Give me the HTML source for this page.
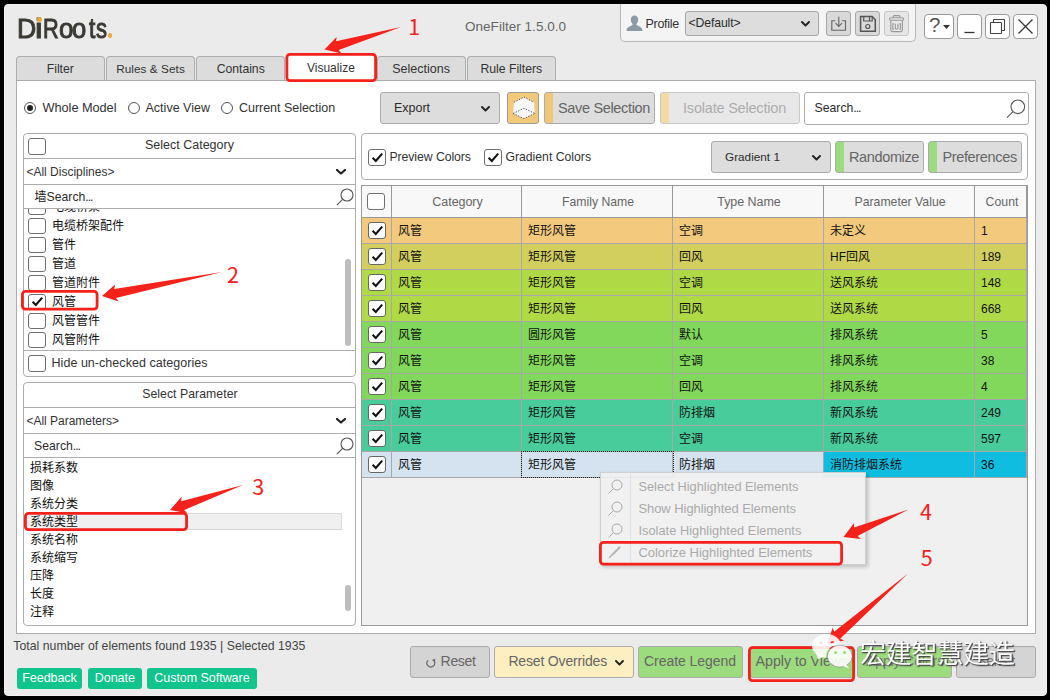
<!DOCTYPE html><html lang="zh"><head><meta charset="utf-8"><title>OneFilter 1.5.0.0</title><style>
*{box-sizing:border-box;margin:0;padding:0}
html,body{width:1050px;height:700px;overflow:hidden;background:#000}
body{font-family:"Liberation Sans", "Noto Sans CJK SC", sans-serif;font-size:13px;color:#333;position:relative}
.a{position:absolute}
.win{left:4px;top:4px;width:1043px;height:692px;background:#ebebeb;border:1px solid #f1f1f1;border-radius:4px}
.tab{top:56px;height:25px;width:89px;background:#dcdcdc;border:1px solid #adadad;border-bottom:none;border-radius:4px 4px 0 0}
.panel{background:#fff;border:1px solid #adadad}
.btn{background:#dddddd;border:1px solid #ababab;border-radius:3px}
.t{white-space:nowrap;line-height:20px}
.cb{background:#fff;border:1px solid #707070;border-radius:3px}
.cj{font-size:12px;color:#111;letter-spacing:0}
.hl{border-top:1px solid #adadad;height:0}
.row{left:362px;width:665px;height:26px}
.cell{top:0;height:26px;border-right:1px solid #a8a8a8;border-bottom:1px solid #a8a8a8;line-height:27px;font-size:12px;color:#111;padding-left:6px;white-space:nowrap}
.hd{top:0;height:32px;background:#f8f8f8;border-right:1px solid #999;border-bottom:1px solid #999}
.num{color:#f5211b;font-size:21px;line-height:20px;font-family:"Noto Sans CJK SC","Liberation Sans",sans-serif}
</style></head><body>
<div class="a win"></div>
<div class="a" id="logo" style="left:0;top:10.950px;height:36px;width:130px;font-size:28.0px;line-height:36px;color:#3a3933;-webkit-text-stroke:1.0px #3a3933;white-space:nowrap">
<span class="a" style="left:17.21px;top:0;transform-origin:0 0;transform:scaleX(0.953)">D</span><span class="a" style="left:35.07px;top:0;transform-origin:0 0;transform:scaleX(1.219)">i</span><span class="a" style="left:43.02px;top:0;transform-origin:0 0;transform:scaleX(0.776)">R</span><span class="a" style="left:58.81px;top:0;transform-origin:0 0;transform:scaleX(0.930)">o</span><span class="a" style="left:71.82px;top:0;transform-origin:0 0;transform:scaleX(0.915)">o</span><span class="a" style="left:88.96px;top:0;transform-origin:0 0;transform:scaleX(0.811)">t</span><span class="a" style="left:96.39px;top:0;transform-origin:0 0;transform:scaleX(0.786)">s</span><span class="a" style="left:107.500px;top:22.550px;width:4.600px;height:4.600px;border-radius:50%;background:#e9a83a;color:transparent;-webkit-text-stroke:0;overflow:hidden;font-size:4px;line-height:4px">.</span>
</div>
<div class="a" style="left:37.2px;top:16.600px;width:5.200px;height:5.200px;border-radius:50%;background:#e9a83a"></div>
<div class="a t" style="left:465.0px;top:17.0px;font-size:13.50px;letter-spacing:0.03px;color:#666;line-height:20px;">OneFilter 1.5.0.0</div>
<div class="a" style="left:620px;top:4px;width:296px;height:38px;background:#f4f4f4;border:1px solid #b5b5b5;border-top:none;border-radius:0 0 5px 5px"></div>
<svg class="a" style="left:626px;top:14.500px" width="17" height="17" viewBox="0 0 17 17"><path d="M8.500.5c2.300 0 3.700 1.700 3.700 4.100 0 1.900-.8 3.500-1.700 4.400v1.300c2.600.9 5.600 2.200 5.800 4.400l.1 1.300H.6l.1-1.300c.2-2.200 3.200-3.500 5.800-4.400V9C5.600 8.100 4.800 6.500 4.800 4.600 4.800 2.200 6.200.5 8.500.5z" fill="#8c98a4"/></svg>
<div class="a t" style="left:645.5px;top:13.5px;font-size:12.50px;letter-spacing:-0.28px;color:#333;line-height:20px;">Profile</div>
<div class="a btn" style="left:685px;top:11px;width:134px;height:25px;border-color:#a5a5a5"></div>
<div class="a t" style="left:688.5px;top:13.0px;font-size:12.25px;letter-spacing:-0.12px;color:#2c2c2c;line-height:20px;">&lt;Default&gt;</div>
<svg class="a" style="left:800.5px;top:20.5px" width="9" height="6" viewBox="0 0 9 6"><path d="M1 1 L4.5 4.5 L8 1" fill="none" stroke="#222" stroke-width="1.9" stroke-linecap="round" stroke-linejoin="round"/></svg>
<div class="a btn" style="left:826px;top:11px;width:25px;height:25px;background:#d9d9d9;border-color:#a8a8a8"></div>
<div class="a btn" style="left:855px;top:11px;width:25px;height:25px;background:#d9d9d9;border-color:#a8a8a8"></div>
<div class="a btn" style="left:884px;top:11px;width:25px;height:25px;background:#e6e6e6;border-color:#c6c6c6"></div>
<svg class="a" style="left:826px;top:11px" width="25" height="25" viewBox="0 0 25 25" fill="none" stroke="#666" stroke-width="1.100"><path d="M9.300 9.800H5.800V19.300H19.500V9.800H16.200"/><path d="M12.800 5.800V15.400M9.600 12.200l3.200 3.200 3.200-3.200"/></svg>
<svg class="a" style="left:855px;top:11px" width="25" height="25" viewBox="0 0 25 25" fill="none" stroke="#555" stroke-width="1.200"><path d="M5.600 5.600H17.200L20.300 8.800V20.200H5.600z" stroke-width="1.500"/><path d="M8.700 5.600V10H17.200V5.600"/><path d="M14.500 5.600V10"/><circle cx="12.800" cy="15.500" r="2"/></svg>
<svg class="a" style="left:884px;top:11px" width="25" height="25" viewBox="0 0 25 25" fill="none" stroke="#999" stroke-width="1.100"><rect x="5.500" y="6.800" width="14.200" height="2.400" rx="1.200"/><path d="M9.200 6.800V5.600Q9.200 4.600 10.200 4.600H15Q16 4.600 16 5.600V6.800"/><path d="M6.800 9.200V19Q6.800 20.600 8.400 20.600H16.800Q18.400 20.600 18.400 19V9.200"/><path d="M10 12.800H8.800V18.200H10M15.200 12.800H16.400V18.200H15.200M11.300 12.800V17Q11.300 18.200 12.600 18.200Q13.900 18.200 13.900 17V12.800"/></svg>
<div class="a" style="left:924px;top:14px;width:30px;height:25px;background:#fff;border:1px solid #999;border-radius:4px"></div>
<div class="a" style="left:957px;top:14px;width:25px;height:25px;background:#fff;border:1px solid #999;border-radius:4px"></div>
<div class="a" style="left:985px;top:14px;width:25px;height:25px;background:#fff;border:1px solid #999;border-radius:4px"></div>
<div class="a" style="left:1013px;top:14px;width:25px;height:25px;background:#fff;border:1px solid #999;border-radius:4px"></div>
<div class="a t" style="left:929px;top:13px;font-size:20.500px;line-height:24px;color:#555">?</div>
<svg class="a" style="left:943px;top:25px" width="8" height="5"><path d="M0 0H7L3.500 4z" fill="#333"/></svg>
<svg class="a" style="left:957px;top:14px" width="25" height="25" fill="none" stroke="#333" stroke-width="1.300"><path d="M7.500 18.500H17.500"/></svg>
<svg class="a" style="left:985px;top:14px" width="25" height="25" fill="none" stroke="#444" stroke-width="1.100"><rect x="5.500" y="8.500" width="11" height="11" rx=".6"/><path d="M8.500 8.500V6Q8.500 5.500 9 5.500H19Q19.500 5.500 19.500 6V16Q19.500 16.500 19 16.500H16.500"/></svg>
<svg class="a" style="left:1013px;top:14px" width="25" height="25" fill="none" stroke="#333" stroke-width="1.300"><path d="M5.500 5.500L19.500 19.500M19.500 5.500L5.500 19.500"/></svg>
<div class="a tab" style="left:16.0px"></div>
<div class="a tab" style="left:106.2px"></div>
<div class="a tab" style="left:196.4px"></div>
<div class="a tab" style="left:376.8px"></div>
<div class="a tab" style="left:467.0px"></div>
<div class="a panel" style="left:16px;top:80px;width:1020px;height:554px"></div>
<div class="a" style="left:287px;top:55px;width:89px;height:27px;background:#fff"></div>
<div class="a t" style="left:46.7px;top:59.0px;font-size:12.25px;letter-spacing:-0.00px;color:#333;line-height:20px;">Filter</div>
<div class="a t" style="left:116.2px;top:59.0px;font-size:11.75px;letter-spacing:0.06px;color:#333;line-height:20px;">Rules &amp; Sets</div>
<div class="a t" style="left:216.7px;top:59.0px;font-size:12.25px;letter-spacing:-0.04px;color:#333;line-height:20px;">Contains</div>
<div class="a t" style="left:306.9px;top:57.5px;font-size:12.00px;letter-spacing:0.02px;color:#333;line-height:20px;">Visualize</div>
<div class="a t" style="left:392.3px;top:59.0px;font-size:12.50px;letter-spacing:-0.01px;color:#333;line-height:20px;">Selections</div>
<div class="a t" style="left:480.5px;top:59.0px;font-size:12.25px;letter-spacing:-0.03px;color:#333;line-height:20px;">Rule Filters</div>
<div class="a" style="left:23.8px;top:101.8px;width:12.500px;height:12.500px;border:1px solid #555;border-radius:50%;background:#fff"></div><div class="a" style="left:26.8px;top:104.8px;width:6.400px;height:6.400px;border-radius:50%;background:#222"></div>
<div class="a t" style="left:42.5px;top:97.5px;font-size:12.75px;letter-spacing:-0.04px;color:#333;line-height:20px;">Whole Model</div>
<div class="a" style="left:127.8px;top:101.8px;width:12.500px;height:12.500px;border:1px solid #555;border-radius:50%;background:#fff"></div>
<div class="a t" style="left:145.5px;top:97.5px;font-size:12.50px;letter-spacing:0.01px;color:#333;line-height:20px;">Active View</div>
<div class="a" style="left:220.8px;top:101.8px;width:12.500px;height:12.500px;border:1px solid #555;border-radius:50%;background:#fff"></div>
<div class="a t" style="left:239.0px;top:97.5px;font-size:12.50px;letter-spacing:-0.03px;color:#333;line-height:20px;">Current Selection</div>
<div class="a btn" style="left:380px;top:92px;width:120px;height:32px"></div>
<div class="a t" style="left:394.0px;top:97.5px;font-size:12.50px;letter-spacing:-0.02px;color:#2c2c2c;line-height:20px;">Export</div>
<svg class="a" style="left:480.5px;top:105.5px" width="9" height="6" viewBox="0 0 9 6"><path d="M1 1 L4.5 4.5 L8 1" fill="none" stroke="#222" stroke-width="1.9" stroke-linecap="round" stroke-linejoin="round"/></svg>
<div class="a btn" style="left:507px;top:92px;width:32px;height:32px;background:#f2c979;border-color:#9a9a9a"></div>
<svg class="a" style="left:507px;top:92px" width="32" height="32" viewBox="0 0 32 32"><path d="M17 5.100L27 10.300L27.900 21.400L17 26.600L6.100 21.400L7 10.300z" fill="#f8f8f8"/><path d="M7 10.300L17 5.100L27 10.300M6.100 21.400L17 16.300L27.900 21.400M6.100 21.400L17 26.600L27.900 21.400" fill="none" stroke="#4a5060" stroke-width="1" stroke-dasharray="1.300 1.500"/></svg>
<div class="a btn" style="left:544px;top:92px;width:111px;height:32px;background:linear-gradient(90deg,#f0c878 8px,#dddddd 8px)"></div>
<div class="a t" style="left:558.0px;top:97.5px;font-size:14.50px;letter-spacing:-0.34px;color:#666;line-height:20px;">Save Selection</div>
<div class="a btn" style="left:660px;top:92px;width:140px;height:32px;border-color:#c8c8c8;background:linear-gradient(90deg,#f6d9a3 8px,#e8e8e8 8px)"></div>
<div class="a t" style="left:683.0px;top:97.5px;font-size:14.50px;letter-spacing:-0.20px;color:#adadad;line-height:20px;">Isolate Selection</div>
<div class="a" style="left:804px;top:92px;width:225px;height:33px;background:#fff;border:1px solid #adadad;border-radius:3px"></div>
<div class="a t" style="left:814.5px;top:98.0px;font-size:12.250px;color:#2c2c2c">Search<span style="letter-spacing:-1.100px">...</span></div>
<svg class="a" style="left:1001.2px;top:98.2px" width="27" height="27"><circle cx="16.8" cy="8.8" r="6.8" fill="none" stroke="#555" stroke-width="1.1"/><path d="M12.0 13.6L6.0 19.6" stroke="#555" stroke-width="1.1"/></svg>
<div class="a panel" style="left:23px;top:133px;width:333px;height:244px;border-radius:4px"></div>
<div class="a cb" style="left:28.0px;top:138.0px;width:18px;height:17px;border-color:#707070"></div>
<div class="a t" style="left:145.0px;top:135.0px;font-size:12.50px;letter-spacing:0.00px;color:#333;line-height:20px;">Select Category</div>
<div class="a hl" style="left:23px;top:158px;width:333px"></div>
<div class="a t" style="left:26.4px;top:161.5px;font-size:12.00px;letter-spacing:-0.00px;color:#333;line-height:20px;">&lt;All Disciplines&gt;</div>
<svg class="a" style="left:336.0px;top:168.5px" width="10" height="6" viewBox="0 0 10 6"><path d="M1 1 L5.0 4.5 L9 1" fill="none" stroke="#222" stroke-width="2.2" stroke-linecap="round" stroke-linejoin="round"/></svg>
<div class="a hl" style="left:23px;top:184px;width:333px"></div>
<div class="a t cj" style="left:34.5px;top:187px">墙</div>
<div class="a t" style="left:46.5px;top:187.0px;font-size:12.250px;color:#2c2c2c">Search<span style="letter-spacing:-1.100px">...</span></div>
<svg class="a" style="left:330.5px;top:186.5px" width="26" height="26"><circle cx="16.0" cy="8.0" r="6.0" fill="none" stroke="#555" stroke-width="1.1"/><path d="M11.8 12.2L5.8 18.2" stroke="#555" stroke-width="1.1"/></svg>
<div class="a hl" style="left:23px;top:208px;width:333px"></div>
<div class="a" style="left:24px;top:209px;width:331px;height:141px;overflow:hidden">
<div class="a cb" style="left:4.0px;top:-10.5px;width:18px;height:16px;border-color:#707070"></div>
<div class="a t cj" style="left:28px;top:-12.5px">电缆桥架</div>
<div class="a cb" style="left:4.0px;top:8.5px;width:18px;height:16px;border-color:#707070"></div>
<div class="a t cj" style="left:28px;top:6.5px">电缆桥架配件</div>
<div class="a cb" style="left:4.0px;top:27.5px;width:18px;height:16px;border-color:#707070"></div>
<div class="a t cj" style="left:28px;top:25.5px">管件</div>
<div class="a cb" style="left:4.0px;top:46.5px;width:18px;height:16px;border-color:#707070"></div>
<div class="a t cj" style="left:28px;top:44.5px">管道</div>
<div class="a cb" style="left:4.0px;top:65.5px;width:18px;height:16px;border-color:#707070"></div>
<div class="a t cj" style="left:28px;top:63.5px">管道附件</div>
<div class="a cb" style="left:4.0px;top:84.5px;width:18px;height:16px;border-color:#707070"></div><svg class="a" style="left:6.5px;top:87.0px" width="13" height="11"><path d="M1.600 5.800L4.800 9L11.200 1.600" fill="none" stroke="#111" stroke-width="2.100"/></svg>
<div class="a t cj" style="left:28px;top:82.5px">风管</div>
<div class="a cb" style="left:4.0px;top:103.5px;width:18px;height:16px;border-color:#707070"></div>
<div class="a t cj" style="left:28px;top:101.5px">风管管件</div>
<div class="a cb" style="left:4.0px;top:122.5px;width:18px;height:16px;border-color:#707070"></div>
<div class="a t cj" style="left:28px;top:120.5px">风管附件</div>
</div>
<div class="a" style="left:345px;top:259px;width:6px;height:87px;border-radius:3px;background:#bdbdbd"></div>
<div class="a hl" style="left:23px;top:350px;width:333px"></div>
<div class="a cb" style="left:28.0px;top:355.0px;width:18px;height:17px;border-color:#707070"></div>
<div class="a t" style="left:51.5px;top:352.5px;font-size:12.50px;letter-spacing:0.04px;color:#333;line-height:20px;">Hide un-checked categories</div>
<div class="a panel" style="left:23px;top:382px;width:333px;height:244px;border-radius:4px"></div>
<div class="a t" style="left:142.2px;top:384.0px;font-size:12.25px;letter-spacing:0.05px;color:#333;line-height:20px;">Select Parameter</div>
<div class="a hl" style="left:23px;top:407px;width:333px"></div>
<div class="a t" style="left:26.4px;top:410.5px;font-size:12.00px;letter-spacing:-0.01px;color:#333;line-height:20px;">&lt;All Parameters&gt;</div>
<svg class="a" style="left:336.0px;top:417.5px" width="10" height="6" viewBox="0 0 10 6"><path d="M1 1 L5.0 4.5 L9 1" fill="none" stroke="#222" stroke-width="2.2" stroke-linecap="round" stroke-linejoin="round"/></svg>
<div class="a hl" style="left:23px;top:433px;width:333px"></div>
<div class="a t" style="left:34px;top:435.5px;font-size:12.250px;color:#2c2c2c">Search<span style="letter-spacing:-1.100px">...</span></div>
<svg class="a" style="left:330.5px;top:435.5px" width="26" height="26"><circle cx="16.0" cy="8.0" r="6.0" fill="none" stroke="#555" stroke-width="1.1"/><path d="M11.8 12.2L5.8 18.2" stroke="#555" stroke-width="1.1"/></svg>
<div class="a hl" style="left:23px;top:457px;width:333px"></div>
<div class="a" style="left:25px;top:513px;width:317px;height:17px;background:#f0f0f0;border:1px solid #dadada"></div>
<div class="a t cj" style="left:30px;top:457.5px">损耗系数</div>
<div class="a t cj" style="left:30px;top:475.5px">图像</div>
<div class="a t cj" style="left:30px;top:493.5px">系统分类</div>
<div class="a t cj" style="left:30px;top:511.5px">系统类型</div>
<div class="a t cj" style="left:30px;top:529.5px">系统名称</div>
<div class="a t cj" style="left:30px;top:547.5px">系统缩写</div>
<div class="a t cj" style="left:30px;top:565.5px">压降</div>
<div class="a t cj" style="left:30px;top:583.5px">长度</div>
<div class="a t cj" style="left:30px;top:601.5px">注释</div>
<div class="a" style="left:345px;top:585px;width:6px;height:26px;border-radius:3px;background:#bdbdbd"></div>
<div class="a panel" style="left:361px;top:133px;width:667px;height:47px;border-radius:4px"></div>
<div class="a cb" style="left:368.0px;top:149.0px;width:18px;height:17px;border-color:#707070"></div><svg class="a" style="left:370.5px;top:152.0px" width="13" height="11"><path d="M1.600 5.800L4.800 9L11.200 1.600" fill="none" stroke="#111" stroke-width="2.100"/></svg>
<div class="a t" style="left:389.4px;top:146.5px;font-size:12.25px;letter-spacing:-0.06px;color:#333;line-height:20px;">Preview Colors</div>
<div class="a cb" style="left:484.0px;top:149.0px;width:18px;height:17px;border-color:#707070"></div><svg class="a" style="left:486.5px;top:152.0px" width="13" height="11"><path d="M1.600 5.800L4.800 9L11.200 1.600" fill="none" stroke="#111" stroke-width="2.100"/></svg>
<div class="a t" style="left:505.4px;top:146.5px;font-size:12.25px;letter-spacing:-0.01px;color:#333;line-height:20px;">Gradient Colors</div>
<div class="a btn" style="left:711px;top:141px;width:120px;height:32px"></div>
<div class="a t" style="left:725.0px;top:146.5px;font-size:11.75px;letter-spacing:0.01px;color:#2c2c2c;line-height:20px;">Gradient 1</div>
<svg class="a" style="left:811.5px;top:154.5px" width="9" height="6" viewBox="0 0 9 6"><path d="M1 1 L4.5 4.5 L8 1" fill="none" stroke="#222" stroke-width="1.9" stroke-linecap="round" stroke-linejoin="round"/></svg>
<div class="a btn" style="left:835px;top:141px;width:89px;height:32px;background:linear-gradient(90deg,#9cdb7e 8px,#dddddd 8px)"></div>
<div class="a t" style="left:849.0px;top:146.5px;font-size:14.50px;letter-spacing:-0.37px;color:#666;line-height:20px;">Randomize</div>
<div class="a btn" style="left:928px;top:141px;width:94px;height:32px;background:linear-gradient(90deg,#9cdb7e 8px,#dddddd 8px)"></div>
<div class="a t" style="left:942.4px;top:146.5px;font-size:14.50px;letter-spacing:-0.34px;color:#666;line-height:20px;">Preferences</div>
<div class="a" style="left:361px;top:185px;width:667px;height:441px;background:#f0f0f0;border:1px solid #999"></div>
<div class="a row" style="top:186px;height:32px">
<div class="a hd" style="left:0px;width:30px"></div>
<div class="a hd" style="left:30px;width:130px"></div>
<div class="a hd" style="left:160px;width:151px"></div>
<div class="a hd" style="left:311px;width:151px"></div>
<div class="a hd" style="left:462px;width:151px"></div>
<div class="a hd" style="left:613px;width:52px"></div>
</div>
<div class="a t" style="left:432.3px;top:191.5px;font-size:12.50px;letter-spacing:-0.04px;color:#666;line-height:20px;">Category</div>
<div class="a t" style="left:562.0px;top:191.5px;font-size:12.25px;letter-spacing:-0.01px;color:#666;line-height:20px;">Family Name</div>
<div class="a t" style="left:717.3px;top:191.5px;font-size:12.50px;letter-spacing:-0.06px;color:#666;line-height:20px;">Type Name</div>
<div class="a t" style="left:854.5px;top:191.5px;font-size:12.25px;letter-spacing:-0.00px;color:#666;line-height:20px;">Parameter Value</div>
<div class="a t" style="left:985.5px;top:191.5px;font-size:12.25px;letter-spacing:0.06px;color:#666;line-height:20px;">Count</div>
<div class="a cb" style="left:367.0px;top:193.0px;width:18px;height:17px;border-color:#707070"></div>
<div class="a row" style="top:218px;background:#f2c97d">
<div class="a cell" style="left:0px;width:30px;"></div>
<div class="a cell" style="left:30px;width:130px;">风管</div>
<div class="a cell" style="left:160px;width:151px;">矩形风管</div>
<div class="a cell" style="left:311px;width:151px;">空调</div>
<div class="a cell" style="left:462px;width:151px;">未定义</div>
<div class="a cell" style="left:613px;width:52px;">1</div>
</div>
<div class="a cb" style="left:368.0px;top:222.0px;width:18px;height:17px;border-color:#666"></div><svg class="a" style="left:370.5px;top:225.0px" width="13" height="11"><path d="M1.600 5.800L4.800 9L11.200 1.600" fill="none" stroke="#111" stroke-width="2.100"/></svg>
<div class="a row" style="top:244px;background:#d3cf5f">
<div class="a cell" style="left:0px;width:30px;"></div>
<div class="a cell" style="left:30px;width:130px;">风管</div>
<div class="a cell" style="left:160px;width:151px;">矩形风管</div>
<div class="a cell" style="left:311px;width:151px;">回风</div>
<div class="a cell" style="left:462px;width:151px;">HF回风</div>
<div class="a cell" style="left:613px;width:52px;">189</div>
</div>
<div class="a cb" style="left:368.0px;top:248.0px;width:18px;height:17px;border-color:#666"></div><svg class="a" style="left:370.5px;top:251.0px" width="13" height="11"><path d="M1.600 5.800L4.800 9L11.200 1.600" fill="none" stroke="#111" stroke-width="2.100"/></svg>
<div class="a row" style="top:270px;background:#b0d946">
<div class="a cell" style="left:0px;width:30px;"></div>
<div class="a cell" style="left:30px;width:130px;">风管</div>
<div class="a cell" style="left:160px;width:151px;">矩形风管</div>
<div class="a cell" style="left:311px;width:151px;">空调</div>
<div class="a cell" style="left:462px;width:151px;">送风系统</div>
<div class="a cell" style="left:613px;width:52px;">148</div>
</div>
<div class="a cb" style="left:368.0px;top:274.0px;width:18px;height:17px;border-color:#666"></div><svg class="a" style="left:370.5px;top:277.0px" width="13" height="11"><path d="M1.600 5.800L4.800 9L11.200 1.600" fill="none" stroke="#111" stroke-width="2.100"/></svg>
<div class="a row" style="top:296px;background:#b0d946">
<div class="a cell" style="left:0px;width:30px;"></div>
<div class="a cell" style="left:30px;width:130px;">风管</div>
<div class="a cell" style="left:160px;width:151px;">矩形风管</div>
<div class="a cell" style="left:311px;width:151px;">回风</div>
<div class="a cell" style="left:462px;width:151px;">送风系统</div>
<div class="a cell" style="left:613px;width:52px;">668</div>
</div>
<div class="a cb" style="left:368.0px;top:300.0px;width:18px;height:17px;border-color:#666"></div><svg class="a" style="left:370.5px;top:303.0px" width="13" height="11"><path d="M1.600 5.800L4.800 9L11.200 1.600" fill="none" stroke="#111" stroke-width="2.100"/></svg>
<div class="a row" style="top:322px;background:#82d85a">
<div class="a cell" style="left:0px;width:30px;"></div>
<div class="a cell" style="left:30px;width:130px;">风管</div>
<div class="a cell" style="left:160px;width:151px;">圆形风管</div>
<div class="a cell" style="left:311px;width:151px;">默认</div>
<div class="a cell" style="left:462px;width:151px;">排风系统</div>
<div class="a cell" style="left:613px;width:52px;">5</div>
</div>
<div class="a cb" style="left:368.0px;top:326.0px;width:18px;height:17px;border-color:#666"></div><svg class="a" style="left:370.5px;top:329.0px" width="13" height="11"><path d="M1.600 5.800L4.800 9L11.200 1.600" fill="none" stroke="#111" stroke-width="2.100"/></svg>
<div class="a row" style="top:348px;background:#82d85a">
<div class="a cell" style="left:0px;width:30px;"></div>
<div class="a cell" style="left:30px;width:130px;">风管</div>
<div class="a cell" style="left:160px;width:151px;">矩形风管</div>
<div class="a cell" style="left:311px;width:151px;">空调</div>
<div class="a cell" style="left:462px;width:151px;">排风系统</div>
<div class="a cell" style="left:613px;width:52px;">38</div>
</div>
<div class="a cb" style="left:368.0px;top:352.0px;width:18px;height:17px;border-color:#666"></div><svg class="a" style="left:370.5px;top:355.0px" width="13" height="11"><path d="M1.600 5.800L4.800 9L11.200 1.600" fill="none" stroke="#111" stroke-width="2.100"/></svg>
<div class="a row" style="top:374px;background:#82d85a">
<div class="a cell" style="left:0px;width:30px;"></div>
<div class="a cell" style="left:30px;width:130px;">风管</div>
<div class="a cell" style="left:160px;width:151px;">矩形风管</div>
<div class="a cell" style="left:311px;width:151px;">回风</div>
<div class="a cell" style="left:462px;width:151px;">排风系统</div>
<div class="a cell" style="left:613px;width:52px;">4</div>
</div>
<div class="a cb" style="left:368.0px;top:378.0px;width:18px;height:17px;border-color:#666"></div><svg class="a" style="left:370.5px;top:381.0px" width="13" height="11"><path d="M1.600 5.800L4.800 9L11.200 1.600" fill="none" stroke="#111" stroke-width="2.100"/></svg>
<div class="a row" style="top:400px;background:#48cc9c">
<div class="a cell" style="left:0px;width:30px;"></div>
<div class="a cell" style="left:30px;width:130px;">风管</div>
<div class="a cell" style="left:160px;width:151px;">矩形风管</div>
<div class="a cell" style="left:311px;width:151px;">防排烟</div>
<div class="a cell" style="left:462px;width:151px;">新风系统</div>
<div class="a cell" style="left:613px;width:52px;">249</div>
</div>
<div class="a cb" style="left:368.0px;top:404.0px;width:18px;height:17px;border-color:#666"></div><svg class="a" style="left:370.5px;top:407.0px" width="13" height="11"><path d="M1.600 5.800L4.800 9L11.200 1.600" fill="none" stroke="#111" stroke-width="2.100"/></svg>
<div class="a row" style="top:426px;background:#48cc9c">
<div class="a cell" style="left:0px;width:30px;"></div>
<div class="a cell" style="left:30px;width:130px;">风管</div>
<div class="a cell" style="left:160px;width:151px;">矩形风管</div>
<div class="a cell" style="left:311px;width:151px;">空调</div>
<div class="a cell" style="left:462px;width:151px;">新风系统</div>
<div class="a cell" style="left:613px;width:52px;">597</div>
</div>
<div class="a cb" style="left:368.0px;top:430.0px;width:18px;height:17px;border-color:#666"></div><svg class="a" style="left:370.5px;top:433.0px" width="13" height="11"><path d="M1.600 5.800L4.800 9L11.200 1.600" fill="none" stroke="#111" stroke-width="2.100"/></svg>
<div class="a row" style="top:452px;background:#0fbde0">
<div class="a cell" style="left:0px;width:30px;background:#d5e3f0;"></div>
<div class="a cell" style="left:30px;width:130px;background:#d5e3f0;">风管</div>
<div class="a cell" style="left:160px;width:151px;background:#d5e3f0;">矩形风管</div>
<div class="a cell" style="left:311px;width:151px;background:#d5e3f0;">防排烟</div>
<div class="a cell" style="left:462px;width:151px;">消防排烟系统</div>
<div class="a cell" style="left:613px;width:52px;">36</div>
</div>
<div class="a cb" style="left:368.0px;top:456.0px;width:18px;height:17px;border-color:#666"></div><svg class="a" style="left:370.5px;top:459.0px" width="13" height="11"><path d="M1.600 5.800L4.800 9L11.200 1.600" fill="none" stroke="#111" stroke-width="2.100"/></svg>
<div class="a" style="left:521px;top:451px;width:153px;height:27px;border:1px dotted #222"></div>
<div class="a" style="left:600px;top:472px;width:266px;height:93px;background:rgba(241,241,241,.93);border:1px solid #d0d0d0;box-shadow:2px 2px 4px rgba(0,0,0,.22)"></div>
<div class="a" style="left:630px;top:474px;width:1px;height:89px;background:#e2e2e2"></div>
<div class="a t" style="left:638.4px;top:476.5px;font-size:12.75px;letter-spacing:0.02px;color:#aaa;line-height:20px;">Select Highlighted Elements</div>
<svg class="a" style="left:602.0px;top:477.5px" width="24" height="24"><circle cx="15.0" cy="7.0" r="5.0" fill="none" stroke="#aaa" stroke-width="1"/><path d="M11.5 10.5L6.5 15.5" stroke="#aaa" stroke-width="1"/></svg>
<div class="a t" style="left:638.4px;top:498.5px;font-size:13.00px;letter-spacing:-0.06px;color:#aaa;line-height:20px;">Show Highlighted Elements</div>
<svg class="a" style="left:602.0px;top:499.5px" width="24" height="24"><circle cx="15.0" cy="7.0" r="5.0" fill="none" stroke="#aaa" stroke-width="1"/><path d="M11.5 10.5L6.5 15.5" stroke="#aaa" stroke-width="1"/></svg>
<div class="a t" style="left:638.4px;top:520.5px;font-size:12.75px;letter-spacing:0.05px;color:#aaa;line-height:20px;">Isolate Highlighted Elements</div>
<svg class="a" style="left:602.0px;top:521.5px" width="24" height="24"><circle cx="15.0" cy="7.0" r="5.0" fill="none" stroke="#aaa" stroke-width="1"/><path d="M11.5 10.5L6.5 15.5" stroke="#aaa" stroke-width="1"/></svg>
<div class="a t" style="left:638.4px;top:542.5px;font-size:13.00px;letter-spacing:-0.01px;color:#aaa;line-height:20px;">Colorize Highlighted Elements</div>
<svg class="a" style="left:607px;top:545.5px" width="14" height="14"><path d="M12.500 1.500L5.500 8.500" stroke="#b5b5b5" stroke-width="2.200" stroke-linecap="round"/><path d="M5.500 8.500Q2.500 9 1.500 12.500Q4.500 12 5.500 8.500z" fill="#b5b5b5"/></svg>
<div class="a t" style="left:13.3px;top:636.0px;font-size:12.25px;letter-spacing:0.03px;color:#444;line-height:20px;">Total number of elements found 1935 | Selected 1935</div>
<div class="a" style="left:17.0px;top:668px;width:65.0px;height:20.500px;background:#10c48c;border-radius:3px"></div>
<div class="a t" style="left:22.3px;top:667.5px;font-size:12.50px;letter-spacing:-0.06px;color:#fff;line-height:20px;">Feedback</div>
<div class="a" style="left:87.5px;top:668px;width:54.5px;height:20.500px;background:#10c48c;border-radius:3px"></div>
<div class="a t" style="left:94.8px;top:667.5px;font-size:12.50px;letter-spacing:-0.05px;color:#fff;line-height:20px;">Donate</div>
<div class="a" style="left:147.0px;top:668px;width:110.0px;height:20.500px;background:#10c48c;border-radius:3px"></div>
<div class="a t" style="left:154.3px;top:667.5px;font-size:12.50px;letter-spacing:-0.04px;color:#fff;line-height:20px;">Custom Software</div>
<div class="a btn" style="left:410px;top:646px;width:80px;height:32px;background:#d4d4d4;border-color:#ababab"></div><div class="a t" style="left:440.6px;top:651.0px;font-size:14.00px;letter-spacing:-0.31px;color:#666;line-height:20px;">Reset</div>
<svg class="a" style="left:425px;top:656px" width="12" height="13" viewBox="0 0 12 13"><path d="M3 4.300A3.900 3.900 0 1 0 9.300 5.300" fill="none" stroke="#666" stroke-width="1.150"/><path d="M6.900 3.900L10.300 2.700L9.900 6.300z" fill="#666"/></svg>
<div class="a btn" style="left:494px;top:646px;width:140px;height:32px;background:#fdefc0;border-color:#ababab"></div><div class="a t" style="left:508.4px;top:651.0px;font-size:14.00px;letter-spacing:-0.17px;color:#666;line-height:20px;">Reset Overrides</div>
<svg class="a" style="left:615.0px;top:659.5px" width="9" height="6" viewBox="0 0 9 6"><path d="M1 1 L4.5 4.5 L8 1" fill="none" stroke="#222" stroke-width="1.9" stroke-linecap="round" stroke-linejoin="round"/></svg>
<div class="a btn" style="left:638px;top:646px;width:105px;height:32px;background:#9cdb7e;border-color:#ababab"></div><div class="a t" style="left:644.0px;top:651.0px;font-size:14.00px;letter-spacing:-0.05px;color:#666;line-height:20px;">Create Legend</div>
<div class="a btn" style="left:750px;top:646px;width:104px;height:32px;background:#9cdb7e;border-color:#ababab"></div><div class="a t" style="left:755.6px;top:651.0px;font-size:14.25px;letter-spacing:-0.05px;color:#666;line-height:20px;">Apply to Views</div>
<div class="a btn" style="left:857px;top:646px;width:95px;height:32px;background:#9cdb7e;border-color:#ababab"></div><div class="a t" style="left:866.0px;top:651.0px;font-size:14.00px;letter-spacing:-0.11px;color:#777;line-height:20px;">Apply Colors</div>
<div class="a btn" style="left:956px;top:646px;width:80px;height:32px;background:#d4d4d4;border-color:#ababab"></div><div class="a t" style="left:977.0px;top:651.0px;font-size:14.00px;letter-spacing:-0.15px;color:#777;line-height:20px;">Select</div>
<svg class="a" style="left:0;top:0" width="1050" height="700">
<rect x="286.90" y="54.40" width="88.70" height="26.20" rx="3" fill="none" stroke="#f5211b" stroke-width="2.8"/>
<rect x="22.40" y="291.40" width="74.70" height="17.70" rx="3" fill="none" stroke="#f5211b" stroke-width="2.8"/>
<rect x="25.40" y="513.40" width="161.20" height="16.20" rx="3" fill="none" stroke="#f5211b" stroke-width="2.8"/>
<rect x="600.40" y="542.40" width="241.20" height="21.70" rx="3" fill="none" stroke="#f5211b" stroke-width="2.8"/>
<rect x="749.40" y="647.70" width="104.20" height="32.90" rx="3" fill="none" stroke="#f5211b" stroke-width="2.8"/>
<polygon fill="#f5211b" points="401.0,27.0 338.7,50.1 341.5,53.6 324.5,49.5 336.6,36.9 336.1,41.3"/>
<polygon fill="#f5211b" points="222.0,272.0 116.0,297.9 118.6,301.6 102.0,296.0 115.2,284.5 114.2,288.9"/>
<polygon fill="#f5211b" points="243.0,485.0 184.2,510.0 187.2,513.3 170.0,510.0 181.6,496.8 181.2,501.3"/>
<polygon fill="#f5211b" points="908.5,509.5 857.6,536.0 860.9,539.1 843.5,537.0 854.1,523.1 854.0,527.5"/>
<polygon fill="#f5211b" points="908.0,573.5 840.1,638.7 844.2,640.6 827.0,644.0 832.8,627.5 834.1,631.7"/>
</svg>
<div class="a num" style="left:399.3px;top:10.6px;width:30px;height:30px;line-height:30px;text-align:center;font-size:21.500px">1</div>
<div class="a num" style="left:217.9px;top:258.5px;width:30px;height:30px;line-height:30px;text-align:center;font-size:21.500px">2</div>
<div class="a num" style="left:243.2px;top:471.4px;width:30px;height:30px;line-height:30px;text-align:center;font-size:21.500px">3</div>
<div class="a num" style="left:911.0px;top:495.5px;width:30px;height:30px;line-height:30px;text-align:center;font-size:21.500px">4</div>
<div class="a num" style="left:911.7px;top:541.5px;width:30px;height:30px;line-height:30px;text-align:center;font-size:21.500px">5</div>
<svg class="a" style="left:805px;top:626px" width="55" height="50" viewBox="805 626 55 50"><defs><mask id="wm"><rect x="805" y="626" width="55" height="50" fill="#fff"/><circle cx="821" cy="642.600" r="1.700" fill="#000"/><circle cx="832.400" cy="642.600" r="1.700" fill="#000"/><ellipse cx="839.800" cy="656.200" rx="13.600" ry="12.100" fill="#000"/></mask><mask id="wm2"><rect x="805" y="626" width="55" height="50" fill="#fff"/><circle cx="835.600" cy="652.400" r="1.500" fill="#000"/><circle cx="844.600" cy="652.400" r="1.500" fill="#000"/></mask></defs><g mask="url(#wm)" fill="#fff" fill-opacity=".88"><ellipse cx="826.500" cy="645.800" rx="14.500" ry="11.800"/><path d="M816 653L818 659.500L824 656z"/></g><g mask="url(#wm2)" fill="#fff" fill-opacity=".9"><ellipse cx="839.800" cy="656.200" rx="12.400" ry="10.900" stroke="#445" stroke-opacity=".55" stroke-width=".7"/><path d="M846 664L849.300 668.500L843 666z"/></g></svg>
<div class="a t" style="left:860px;top:637.800px;font-size:26px;line-height:32px;color:#fff;letter-spacing:-.2px;text-shadow:1px 1px 0 #4a4a4a,1px 1px 2px #444;opacity:.96">宏建智慧建造</div>
</body></html>
